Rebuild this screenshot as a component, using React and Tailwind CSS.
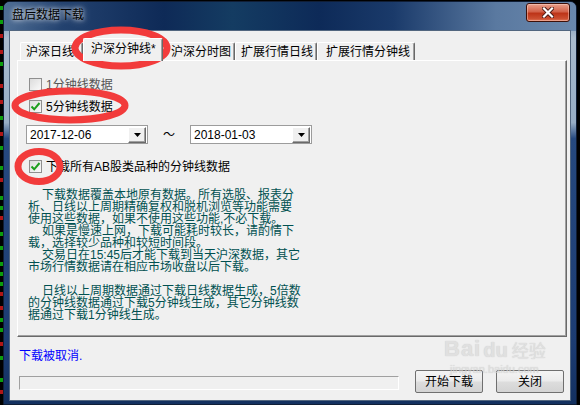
import React from "react";

const ticks = [
  [6, "#0b9e0b"], [20, "#0b9e0b"], [34, "#b01515"], [50, "#b01515"], [62, "#0b9e0b"],
  [84, "#b01515"], [100, "#b01515"], [116, "#0b9e0b"], [132, "#b01515"], [146, "#0b9e0b"],
  [166, "#0b9e0b"], [178, "#b01515"], [196, "#0b9e0b"], [206, "#0b9e0b"], [216, "#b01515"],
  [232, "#0b9e0b"], [246, "#0b9e0b"], [262, "#0b9e0b"], [272, "#0b9e0b"], [282, "#0b9e0b"],
  [292, "#b01515"], [306, "#b01515"], [318, "#0b9e0b"], [328, "#0b9e0b"], [342, "#b01515"],
  [356, "#0b9e0b"], [378, "#0b9e0b"], [390, "#b01515"],
];

const ChartStrip = () => (
  <svg className="absolute left-0 top-0" width="3" height="405">
    {ticks.map(([y, c]) => (
      <rect key={y} x="0" y={y} width="3" height="4" fill={c} />
    ))}
  </svg>
);

const CheckBox = ({ checked }) => (
  <span className="flex h-[13px] w-[13px] shrink-0 items-center justify-center border border-[#8f8f8f] bg-linear-to-br from-[#dcdcdc] to-[#fafafa]">
    {checked && (
      <svg width="11" height="11" viewBox="0 0 11 11">
        <path d="M1.5 5.5 L4.2 8.3 L9.5 2" stroke="#1d9e1d" strokeWidth="2" fill="none" />
      </svg>
    )}
  </span>
);

const DateBox = ({ value }) => (
  <div className="flex h-[19px] w-[122px] items-center justify-between border border-[#9c9c9c] bg-white pl-[3px] pr-px">
    <span className="leading-[12px] text-black">{value}</span>
    <div className="flex h-[16px] w-[18px] items-center justify-center border-t border-l border-t-white border-l-white border-r border-b border-r-[#696969] border-b-[#696969] bg-[#f0f0f0] shadow-[inset_-1px_-1px_0_#a0a0a0]">
      <svg width="7" height="4" viewBox="0 0 7 4">
        <path d="M0 0h7L3.5 4z" fill="#000" />
      </svg>
    </div>
  </div>
);

const Tab = ({ label, width, pad, selected }) => (
  <div
    className={
      selected
        ? "relative z-10 mb-[-1px] flex h-[23px] shrink-0 items-center rounded-t-[2px] border-t border-l border-r border-t-white border-l-white border-r-[#696969] bg-[#f0f0f0] pb-[2px] shadow-[inset_-1px_0_0_#a0a0a0]"
        : "flex h-[18px] shrink-0 items-center rounded-t-[2px] border-t border-l border-r border-t-white border-l-white border-r-[#696969] bg-[#f0f0f0] shadow-[inset_-1px_0_0_#a0a0a0]"
    }
    style={{ width, paddingLeft: pad }}
  >
    <span className="leading-[12px] whitespace-nowrap">{label}</span>
  </div>
);

const lines = [
  ["下载数据覆盖本地原有数据。所有选股、报表分", true],
  ["析、日线以上周期精确复权和脱机浏览等功能需要", false],
  ["使用这些数据，如果不使用这些功能,不必下载。", false],
  ["如果是慢速上网，下载可能耗时较长，请酌情下", true],
  ["载，选择较少品种和较短时间段。", false],
  ["交易日在15:45后才能下载到当天沪深数据，其它", true],
  ["市场行情数据请在相应市场收盘以后下载。", false],
  ["", false],
  ["日线以上周期数据通过下载日线数据生成，5倍数", true],
  ["的分钟线数据通过下载5分钟线生成，其它分钟线数", false],
  ["据通过下载1分钟线生成。", false],
];

const CloseButton = () => (
  <div className="mr-[6px] mt-px flex h-[19px] w-[44px] items-center justify-center rounded-[3px] border border-[#3d1009] bg-[linear-gradient(180deg,#eaa08c_0%,#d2624a_45%,#bd3418_55%,#cb4e30_85%,#de7456_100%)] shadow-[inset_0_0_0_1px_rgba(255,220,210,0.45)]">
    <svg width="12" height="11" viewBox="0 0 12 11">
      <path d="M2 1.5 L10 9.5 M10 1.5 L2 9.5" stroke="#4a1a14" strokeWidth="4" strokeLinecap="square" />
      <path d="M2 1.5 L10 9.5 M10 1.5 L2 9.5" stroke="#ffffff" strokeWidth="2.2" strokeLinecap="square" />
    </svg>
  </div>
);

const Annotations = () => (
  <svg className="pointer-events-none absolute left-0 top-0" width="580" height="405">
    <ellipse cx="121" cy="48" rx="46" ry="18" fill="none" stroke="#f23b3b" strokeWidth="7" />
    <ellipse cx="70" cy="105.5" rx="55" ry="14.5" fill="none" stroke="#f23b3b" strokeWidth="7" />
    <ellipse cx="39" cy="166.5" rx="21" ry="15" fill="none" stroke="#f23b3b" strokeWidth="7" />
  </svg>
);

const Watermark = () => (
  <div className="pointer-events-none absolute left-[444px] top-[338px] flex flex-col items-start text-[#dadada] opacity-70">
    <div className="flex items-end gap-[2px] leading-none">
      <span className="text-[22px] font-bold tracking-[1px] [text-shadow:0_0_1px_#b8b8b8]">Bai</span>
      <span className="text-[20px] font-bold [text-shadow:0_0_1px_#b8b8b8]">du</span>
      <span className="ml-[2px] text-[17px] [text-shadow:0_0_1px_#b8b8b8]">经验</span>
    </div>
    <span className="mt-[4px] pl-[6px] text-[11px] leading-none [text-shadow:0_0_1px_#b8b8b8]">jingyan.baidu.com</span>
  </div>
);

export default function App() {
  return (
    <div className="relative h-[405px] w-[580px] overflow-hidden bg-black font-['Liberation_Sans','Noto_Sans_CJK_SC',sans-serif] text-[12px] text-black">
      <ChartStrip />
      <div className="absolute left-[3px] top-px flex h-[404px] w-[574px] flex-col rounded-t-[7px] border border-[#101e36] bg-[linear-gradient(180deg,#5f7ea6_0%,#a9bbce_9%,#97adc4_30%,#26497f_34%,#1c3c72_85%,#13305f_100%)]">
        <div className="flex h-[29px] shrink-0 items-start justify-between rounded-t-[6px] bg-[linear-gradient(90deg,#4f6e95_0%,#23426f_10%,#0e2a57_28%,#143c62_40%,#0d2a58_55%,#1a3a6a_68%,#5a79a0_86%,#6a88ad_100%)]">
          <span className="ml-[8px] mt-[6px] leading-[14px] text-black [text-shadow:0_0_4px_rgba(255,255,255,0.9),0_0_8px_rgba(255,255,255,0.6)]">
            盘后数据下载
          </span>
          <CloseButton />
        </div>
        <div className="mx-[6px] mb-[4px] flex flex-1 flex-col bg-[#f0f0f0] shadow-[0_0_0_1px_#52667f]">
          <div className="ml-[10px] mt-[7px] flex h-[22px] items-end">
            <Tab label="沪深日线" width={63} pad={5} />
            <Tab label="沪深分钟线*" width={80} pad={7} selected />
            <Tab label="沪深分时图" width={72} pad={7} />
            <Tab label="扩展行情日线" width={82} pad={5} />
            <Tab label="扩展行情分钟线" width={98} pad={8} />
          </div>
          <div className="ml-[7px] mr-[3px] flex h-[277px] flex-col border-t border-l border-t-white border-l-white border-r border-b border-r-[#696969] border-b-[#696969] shadow-[inset_-1px_-1px_0_#a0a0a0]">
            <div className="ml-[11px] mt-[17px] flex h-[13px] items-center gap-[4px]">
              <CheckBox />
              <span className="leading-[12px] text-[#555555]">1分钟线数据</span>
            </div>
            <div className="ml-[11px] mt-[9px] flex h-[13px] items-center gap-[4px]">
              <CheckBox checked />
              <span className="leading-[12px]">5分钟线数据</span>
            </div>
            <div className="ml-[8px] mt-[12px] flex items-center">
              <DateBox value="2017-12-06" />
              <span className="w-[42px] text-center leading-[12px]">～</span>
              <DateBox value="2018-01-03" />
            </div>
            <div className="ml-[11px] mt-[16px] flex h-[13px] items-center gap-[4px]">
              <CheckBox checked />
              <span className="leading-[12px]">下载所有AB股类品种的分钟线数据</span>
            </div>
            <div className="ml-[10px] mt-[16px] flex flex-col text-[#005050]">
              {lines.map(([t, indent], i) => (
                <div key={i} className={indent ? "h-[12px] whitespace-nowrap pl-[14px] leading-[12px]" : "h-[12px] whitespace-nowrap leading-[12px]"}>
                  {t}
                </div>
              ))}
            </div>
          </div>
          <div className="ml-[9px] mt-[13px] leading-[12px] text-[#0000ff]">下载被取消.</div>
          <div className="ml-[9px] mt-[8px] flex items-start">
            <div className="mt-[6px] h-[14px] w-[380px] border-t border-l border-t-[#a0a0a0] border-l-[#a0a0a0] border-r border-b border-r-white border-b-white bg-[#f0f0f0]" />
            <button className="ml-[16px] flex h-[23px] w-[68px] items-center justify-center rounded-[2px] border border-[#6f6f6f] bg-[linear-gradient(180deg,#f4f4f4_0%,#ebebeb_48%,#dddddd_52%,#d3d3d3_100%)] leading-[12px]">
              开始下载
            </button>
            <button className="ml-[13px] flex h-[23px] w-[68px] items-center justify-center rounded-[2px] border border-[#6f6f6f] bg-[linear-gradient(180deg,#f4f4f4_0%,#ebebeb_48%,#dddddd_52%,#d3d3d3_100%)] leading-[12px]">
              关闭
            </button>
          </div>
        </div>
      </div>
      <Annotations />
      <Watermark />
    </div>
  );
}
